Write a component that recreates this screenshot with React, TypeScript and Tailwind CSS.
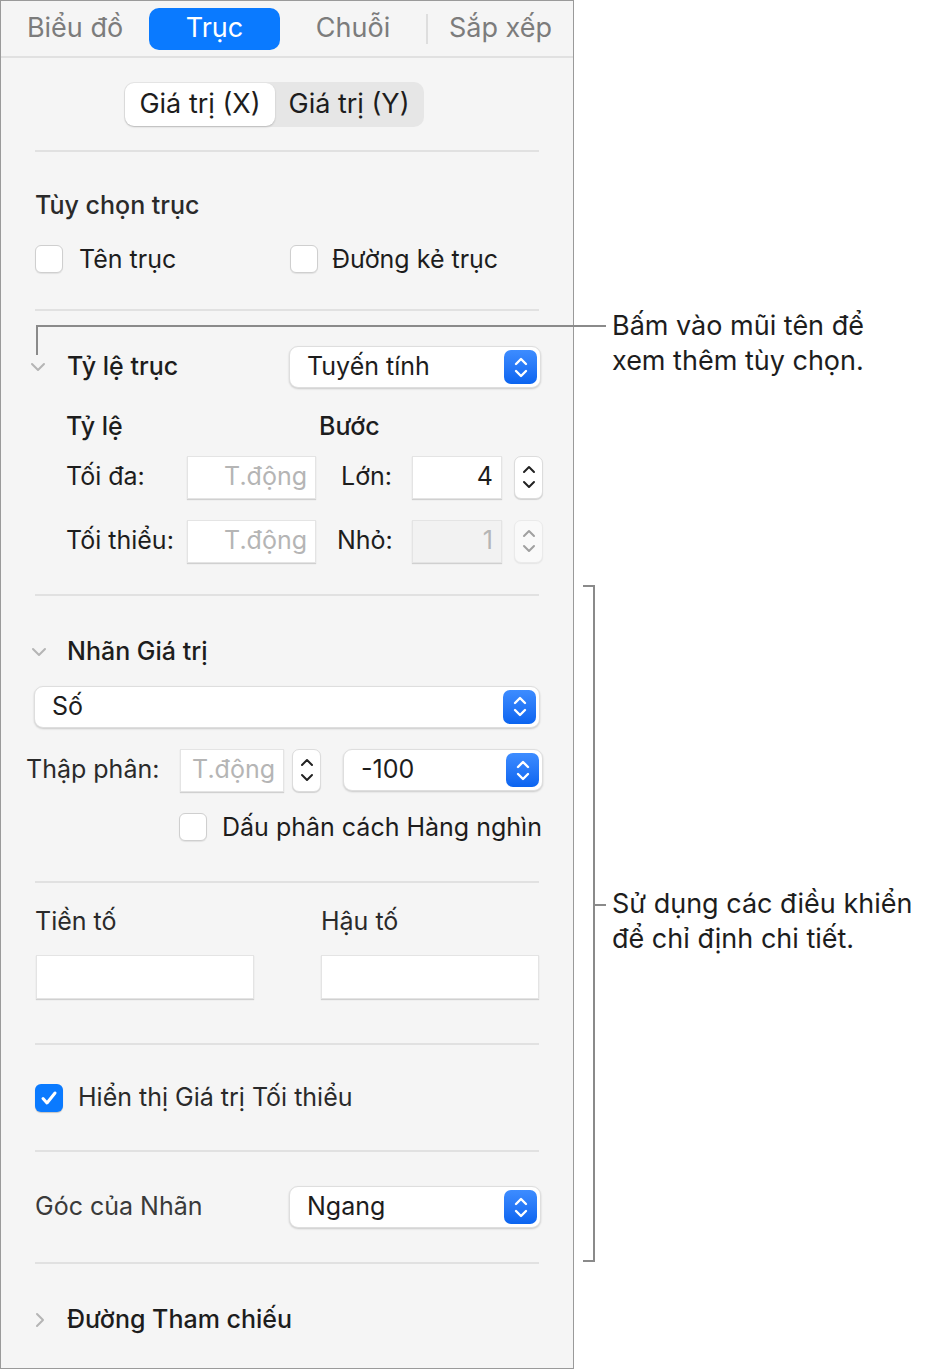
import React from "react";

const Updown = ({ dim = false }: { dim?: boolean }) => (
  <div className={`w-[29px] h-[43px] rounded-[7px] bg-white border border-[#dcdcdc] shadow-[0_1px_1px_rgba(0,0,0,0.15)] flex flex-col items-center justify-center gap-[6px] ${dim ? "opacity-40" : ""}`}>
    <svg width="14" height="9" viewBox="0 0 14 9"><path d="M2 7L7 2L12 7" fill="none" stroke="#222" strokeWidth="2" strokeLinecap="round" strokeLinejoin="round" /></svg>
    <svg width="14" height="9" viewBox="0 0 14 9"><path d="M2 2L7 7L12 2" fill="none" stroke="#222" strokeWidth="2" strokeLinecap="round" strokeLinejoin="round" /></svg>
  </div>
);

const Popup = ({ label, w }: { label: string; w: string }) => (
  <div className={`${w} h-[42px] rounded-[9px] bg-white border border-[#dedede] shadow-[0_1px_2px_rgba(0,0,0,0.18)] flex items-center justify-between pl-[17px] pr-[3px]`}>
    <span className="text-[25px] text-[#1d1d1d]">{label}</span>
    <div className="w-[33px] h-[34px] rounded-[7px] bg-gradient-to-b from-[#3d8cff] to-[#0a64f0] flex flex-col items-center justify-center gap-[3px]">
      <svg width="16" height="9" viewBox="0 0 16 9"><path d="M3 7L8 2L13 7" fill="none" stroke="#fff" strokeWidth="2.4" strokeLinecap="round" strokeLinejoin="round" /></svg>
      <svg width="16" height="9" viewBox="0 0 16 9"><path d="M3 2L8 7L13 2" fill="none" stroke="#fff" strokeWidth="2.4" strokeLinecap="round" strokeLinejoin="round" /></svg>
    </div>
  </div>
);

const Box = () => <div className="w-[28px] h-[28px] rounded-[6px] bg-white border border-[#cfcfcf] shadow-[0_1px_1px_rgba(0,0,0,0.08)] shrink-0" />;

const Field = ({ w, text, dim = false, ph = false }: { w: string; text?: string; dim?: boolean; ph?: boolean }) => (
  <div className={`${w} h-[43px] ${dim ? "bg-[#f2f2f2] text-[#b5b5b5]" : "bg-white"} ${ph ? "text-[#b5b5b5]" : ""} border border-[#e4e4e4] shadow-[0_1px_1px_rgba(0,0,0,0.15)] flex items-center justify-end px-[8px] text-[25px]`}>
    {text}
  </div>
);

const Chev = ({ right = false }: { right?: boolean }) => (
  <svg width="18" height="18" viewBox="0 0 18 18" className="shrink-0">
    {right ? <path d="M6 3L12 9L6 15" fill="none" stroke="#b5b5b5" strokeWidth="2" strokeLinecap="round" strokeLinejoin="round" /> : <path d="M3 6L9 12L15 6" fill="none" stroke="#b5b5b5" strokeWidth="2" strokeLinecap="round" strokeLinejoin="round" />}
  </svg>
);

const Div = () => <div className="mx-[34px] h-[2px] bg-[#e1e1e1] shrink-0" />;

export default function App() {
  return (
    <div className="relative w-[936px] h-[1370px] bg-white text-[#1d1d1d]" style={{ fontFamily: "Inter, 'Noto Sans', sans-serif" }}>
      <div className="w-[574px] h-[1369px] bg-[#f5f5f5] border border-[#9a9a9a] flex flex-col">
        <div className="h-[57px] border-b-2 border-[#e1e1e1] flex items-center text-[27px] text-[#7c7c7c] shrink-0">
          <div className="w-[148px] text-center">Biểu đồ</div>
          <div className="w-[131px] h-[42px] rounded-[10px] bg-[#0a7aff] text-white flex items-center justify-center">Trục</div>
          <div className="w-[146px] text-center">Chuỗi</div>
          <div className="w-[2px] h-[30px] bg-[#dedede]" />
          <div className="flex-1 text-center">Sắp xếp</div>
        </div>
        <div className="h-[92px] flex items-center justify-center pr-[26px] shrink-0">
          <div className="flex h-[45px] rounded-[10px] bg-[#e6e6e6] p-[1px] text-[27px]">
            <div className="w-[150px] bg-white rounded-[9px] shadow-[0_1px_2px_rgba(0,0,0,0.2)] flex items-center justify-center">Giá trị (X)</div>
            <div className="w-[148px] flex items-center justify-center">Giá trị (Y)</div>
          </div>
        </div>
        <Div />
        <div className="h-[157px] px-[34px] pt-[35px] shrink-0 text-[25px]">
          <div className="text-[#2a2a2a] font-medium">Tùy chọn trục</div>
          <div className="flex items-center mt-[16px]">
            <div className="w-[255px] flex items-center gap-[16px]"><Box /><span>Tên trục</span></div>
            <div className="flex items-center gap-[14px]"><Box /><span>Đường kẻ trục</span></div>
          </div>
        </div>
        <Div />
        <div className="h-[283px] shrink-0 text-[25px]">
          <div className="flex items-center mt-[35px] pl-[28px] pr-[32px]">
            <Chev />
            <span className="ml-[20px] font-medium flex-1">Tỷ lệ trục</span>
            <Popup label="Tuyến tính" w="w-[252px]" />
          </div>
          <div className="flex mt-[20px] pl-[65px] font-medium">
            <span className="w-[253px]">Tỷ lệ</span><span>Bước</span>
          </div>
          <div className="flex items-center mt-[10px] pl-[65px]">
            <span className="w-[121px]">Tối đa:</span>
            <Field w="w-[129px]" text="T.động" ph />
            <span className="w-[96px] pl-[25px]">Lớn:</span>
            <Field w="w-[90px]" text="4" />
            <div className="ml-[12px]"><Updown /></div>
          </div>
          <div className="flex items-center mt-[21px] pl-[65px]">
            <span className="w-[121px]">Tối thiểu:</span>
            <Field w="w-[129px]" text="T.động" ph />
            <span className="w-[96px] pl-[21px]">Nhỏ:</span>
            <Field w="w-[90px]" text="1" dim />
            <div className="ml-[12px]"><Updown dim /></div>
          </div>
        </div>
        <Div />
        <div className="h-[285px] shrink-0 text-[25px]">
          <div className="flex items-center mt-[37px] pl-[29px]">
            <Chev />
            <span className="ml-[19px] font-medium">Nhãn Giá trị</span>
          </div>
          <div className="mt-[15px] px-[33px]"><Popup label="Số" w="w-full" /></div>
          <div className="flex items-center mt-[21px] pl-[25px]">
            <span className="w-[154px] text-[#2a2a2a]">Thập phân:</span>
            <Field w="w-[104px]" text="T.động" ph />
            <div className="ml-[8px]"><Updown /></div>
            <div className="ml-[22px]"><Popup label="-100" w="w-[200px]" /></div>
          </div>
          <div className="flex items-center mt-[17px] pl-[178px] gap-[15px]">
            <Box /><span>Dấu phân cách Hàng nghìn</span>
          </div>
        </div>
        <Div />
        <div className="h-[160px] shrink-0 text-[25px] px-[34px] pt-[20px]">
          <div className="flex text-[#2a2a2a]"><span className="w-[286px]">Tiền tố</span><span>Hậu tố</span></div>
          <div className="flex mt-[14px] gap-[67px] pl-[1px]">
            <div className="w-[219px] h-[44px] bg-white border border-[#e4e4e4] shadow-[0_1px_1px_rgba(0,0,0,0.15)]" />
            <div className="w-[219px] h-[44px] bg-white border border-[#e4e4e4] shadow-[0_1px_1px_rgba(0,0,0,0.15)]" />
          </div>
        </div>
        <Div />
        <div className="h-[105px] shrink-0 flex items-center px-[34px] gap-[15px] text-[25px]">
          <div className="w-[28px] h-[28px] rounded-[6px] bg-[#0a7aff] flex items-center justify-center shadow-[0_1px_1px_rgba(0,0,0,0.2)]">
            <svg width="18" height="16" viewBox="0 0 18 16"><path d="M3 8.5L7 13L15 3" fill="none" stroke="#fff" strokeWidth="3" strokeLinecap="round" strokeLinejoin="round" /></svg>
          </div>
          <span className="text-[#2a2a2a]">Hiển thị Giá trị Tối thiểu</span>
        </div>
        <Div />
        <div className="h-[110px] shrink-0 flex items-center pl-[34px] pr-[32px] text-[25px]">
          <span className="flex-1 text-[#3a3a3a]">Góc của Nhãn</span>
          <Popup label="Ngang" w="w-[252px]" />
        </div>
        <Div />
        <div className="flex items-center pl-[30px] mt-[37px] text-[25px]">
          <Chev right />
          <span className="ml-[18px] font-medium">Đường Tham chiếu</span>
        </div>
      </div>

      <div className="absolute left-[36px] top-[325px] w-[570px] h-[2px] bg-[#8a8a8a]" />
      <div className="absolute left-[36px] top-[325px] w-[2px] h-[30px] bg-[#8a8a8a]" />
      <div className="absolute left-[612px] top-[308px] text-[27px] leading-[35px] text-[#1d1d1d]">
        <div>Bấm vào mũi tên để</div>
        <div>xem thêm tùy chọn.</div>
      </div>
      <div className="absolute left-[593px] top-[585px] w-[2px] h-[677px] bg-[#8a8a8a]" />
      <div className="absolute left-[583px] top-[585px] w-[12px] h-[2px] bg-[#8a8a8a]" />
      <div className="absolute left-[583px] top-[1260px] w-[12px] h-[2px] bg-[#8a8a8a]" />
      <div className="absolute left-[593px] top-[904px] w-[13px] h-[2px] bg-[#8a8a8a]" />
      <div className="absolute left-[612px] top-[886px] text-[27px] leading-[35px] text-[#1d1d1d]">
        <div>Sử dụng các điều khiển</div>
        <div>để chỉ định chi tiết.</div>
      </div>
    </div>
  );
}
